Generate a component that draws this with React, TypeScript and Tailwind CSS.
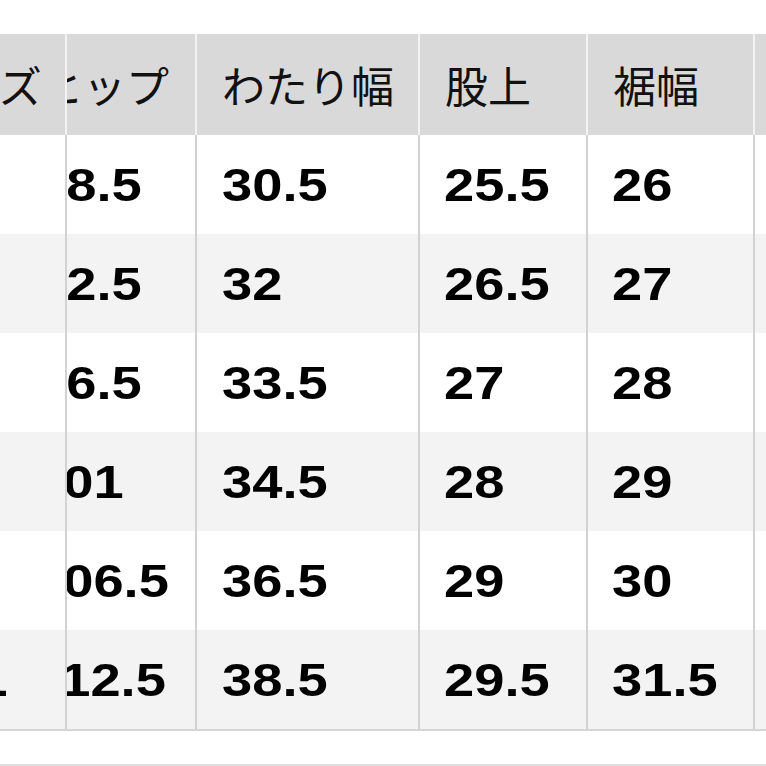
const headers = ["サイズ", "ヒップ", "わたり幅", "股上", "裾幅", "総丈"];

const rows = [
  { size: "XS", hip: "88.5", thigh: "30.5", rise: "25.5", hem: "26", lead1: false },
  { size: "S", hip: "92.5", thigh: "32", rise: "26.5", hem: "27", lead1: false },
  { size: "M", hip: "96.5", thigh: "33.5", rise: "27", hem: "28", lead1: false },
  { size: "L", hip: "101", thigh: "34.5", rise: "28", hem: "29", lead1: true },
  { size: "XL", hip: "106.5", thigh: "36.5", rise: "29", hem: "30", lead1: true },
  { size: "2XL", hip: "112.5", thigh: "38.5", rise: "29.5", hem: "31.5", lead1: true },
];

function Num({ children }: { children: React.ReactNode }) {
  return (
    <span className="inline-block origin-left scale-x-[1.18] whitespace-nowrap font-['Liberation_Sans',Arial,sans-serif] text-[46px] font-bold leading-none text-black">
      {children}
    </span>
  );
}

export default function App() {
  return (
    <div className="h-[766px] w-[766px] overflow-hidden bg-white">
      <div className="pt-[34px]">
        <div className="grid w-[900px] grid-cols-[65px_130px_223px_168px_167px_147px]">
          {/* Header */}
          <div className="flex h-[101px] items-center overflow-hidden bg-[#d9d9d9]">
            <span className="-ml-[86px] whitespace-nowrap font-['Noto_Sans_CJK_JP','Noto_Sans_CJK_SC',sans-serif] text-[43px] leading-none text-[#111]">
              {headers[0]}
            </span>
          </div>
          <div className="flex h-[101px] items-center overflow-hidden border-l-2 border-[#f3f3f3] bg-[#d9d9d9]">
            <span className="-ml-[27px] whitespace-nowrap font-['Noto_Sans_CJK_JP','Noto_Sans_CJK_SC',sans-serif] text-[43px] leading-none text-[#111]">
              {headers[1]}
            </span>
          </div>
          {headers.slice(2).map((h) => (
            <div
              key={h}
              className="flex h-[101px] items-center overflow-hidden border-l-2 border-[#f3f3f3] bg-[#d9d9d9] pl-[25px]"
            >
              <span className="whitespace-nowrap font-['Noto_Sans_CJK_JP','Noto_Sans_CJK_SC',sans-serif] text-[43px] leading-none text-[#111]">
                {h}
              </span>
            </div>
          ))}

          {/* Body */}
          {rows.map((r, i) => {
            const bg = i % 2 === 0 ? "bg-white" : "bg-[#f3f3f3]";
            return (
              <div key={r.size} className="contents">
                <div className={`flex h-[99px] items-center overflow-hidden ${bg}`}>
                  <span className="-ml-[92px]">
                    <Num>{r.size}</Num>
                  </span>
                </div>
                <div className={`flex h-[99px] items-center overflow-hidden border-l-2 border-[#d2d2d2] ${bg}`}>
                  <span className={r.lead1 ? "-ml-[34px]" : "-ml-[31px]"}>
                    <Num>{r.hip}</Num>
                  </span>
                </div>
                <div className={`flex h-[99px] items-center border-l-2 border-[#d2d2d2] pl-[25px] ${bg}`}>
                  <Num>{r.thigh}</Num>
                </div>
                <div className={`flex h-[99px] items-center border-l-2 border-[#d2d2d2] pl-[24px] ${bg}`}>
                  <Num>{r.rise}</Num>
                </div>
                <div className={`flex h-[99px] items-center border-l-2 border-[#d2d2d2] pl-[24px] ${bg}`}>
                  <Num>{r.hem}</Num>
                </div>
                <div className={`h-[99px] border-l-2 border-[#d2d2d2] ${bg}`} />
              </div>
            );
          })}
        </div>
        <div className="h-[2px] w-full bg-[#d6d6d6]" />
        <div className="mt-[33px] h-[2px] w-full bg-[#dedede]" />
      </div>
    </div>
  );
}
